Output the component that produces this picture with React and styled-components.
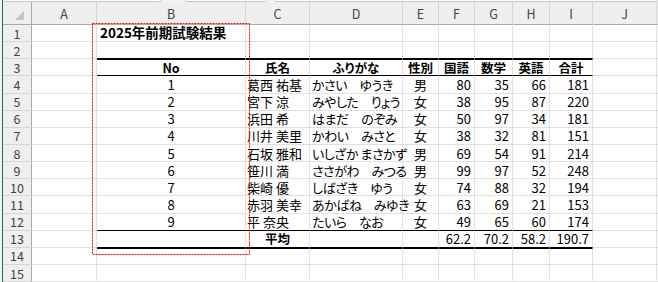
import React from "react"
import styled, { createGlobalStyle } from "styled-components"

const GlobalStyle = createGlobalStyle`
  html, body {
    margin: 0;
    padding: 0;
    background: #fff;
  }
  body {
    font-family: "Noto Sans CJK JP", "Noto Sans", sans-serif;
    color: #000;
  }
`

const LETTERS = ["A", "B", "C", "D", "E", "F", "G", "H", "I", "J", ""]
const WIDTHS = [29, 65, 149, 64, 93, 36, 36, 38, 37, 43, 64, 40]

const students = [
  [1, "葛西 祐基", "かさい　ゆうき", "男", 80, 35, 66, 181],
  [2, "宮下 涼", "みやした　りょう", "女", 38, 95, 87, 220],
  [3, "浜田 希", "はまだ　のぞみ", "女", 50, 97, 34, 181],
  [4, "川井 美里", "かわい　みさと", "女", 38, 32, 81, 151],
  [5, "石坂 雅和", "いしざか まさかず", "男", 69, 54, 91, 214],
  [6, "笹川 満", "ささがわ　みつる", "男", 99, 97, 52, 248],
  [7, "柴崎 優", "しばざき　ゆう", "女", 74, 88, 32, 194],
  [8, "赤羽 美幸", "あかばね　みゆき", "女", 63, 69, 21, 153],
  [9, "平 奈央", "たいら　なお", "女", 49, 65, 60, 174],
]

const Window = styled.div`
  position: relative;
  display: flex;
  width: 658px;
  height: 282px;
  overflow: hidden;
  background: #fff;
`

const Edge = styled.div`
  width: 2px;
  background: #f3f3f3;
`

const GreenLine = styled.div`
  width: 1px;
  background: #1f7244;
`

const Main = styled.div`
  flex: 1;
  min-width: 0;
  display: flex;
  flex-direction: column;
`

const TopBar = styled.div`
  height: 3px;
  display: flex;
  background: #f3f3f3;
  padding-left: 1px;
`

const Field = styled.div`
  box-sizing: border-box;
  width: ${p => p.$w}px;
  margin-right: ${p => p.$gap || 0}px;
  height: 2px;
  background: #fff;
  border: 1px solid #c9c9c9;
  border-top: none;
  border-radius: 0 0 4px 4px;
`

const Sheet = styled.div`
  display: grid;
  grid-template-columns: ${WIDTHS.map(w => w + "px").join(" ")};
  grid-template-rows: 23px repeat(15, 17.1429px);
`

const HeadCell = styled.div`
  box-sizing: border-box;
  display: flex;
  align-items: center;
  justify-content: center;
  background: #efefef;
  color: #444;
  font-size: 12.5px;
  border-right: 1px solid ${p => (p.$row ? "#a9a9a9" : "#d6d6d6")};
  border-bottom: 1px solid ${p => (p.$row ? "#d6d6d6" : "#a9a9a9")};
`

const Corner = styled(HeadCell)`
  align-items: flex-end;
  justify-content: flex-end;
  padding: 0 7px 4px 0;
  border-right: 1px solid #a9a9a9;
`

const justify = { left: "flex-start", center: "center", right: "flex-end" }

const Cell = styled.div`
  box-sizing: border-box;
  display: flex;
  align-items: center;
  justify-content: ${p => justify[p.$align || "left"]};
  padding: 0 ${p => (p.$align === "right" ? 3 : 0)}px 0 ${p => p.$pad || 0}px;
  border-right: 1px solid #e0e0e0;
  border-bottom: 1px solid ${p => (p.$rule ? "#000" : "#e0e0e0")};
  border-top: ${p => (p.$top ? "1px solid #000" : "none")};
  font-size: ${p => p.$size || 13}px;
  font-weight: ${p => (p.$bold ? 700 : 400)};
  font-feature-settings: "palt";
  letter-spacing: ${p => p.$track || 0}px;
  white-space: nowrap;
  line-height: 1;
`

const Marquee = styled.svg`
  position: absolute;
  left: 92px;
  top: 23px;
  pointer-events: none;
`

// columns: 0 = A, 1 = B ... 8 = I, 9 = J; the table spans B..I
const inTable = c => c >= 1 && c <= 8

function cellsFor(r) {
  const row = Array(11).fill(null)
  if (r === 1) {
    row[1] = { text: "2025年前期試験結果", bold: true, size: 13.5, pad: 3 }
  } else if (r === 3) {
    const heads = ["No", "氏名", "ふりがな", "性別", "国語", "数学", "英語", "合計"]
    heads.forEach((h, i) => (row[i + 1] = { text: h, bold: true, align: "center", size: 12.5 }))
  } else if (r >= 4 && r <= 12) {
    const s = students[r - 4]
    row[1] = { text: s[0], align: "center" }
    row[2] = { text: s[1], pad: 1 }
    row[3] = { text: s[2], pad: 2, track: -0.5 }
    row[4] = { text: s[3], align: "center" }
    for (let i = 4; i < 8; i++) row[i + 1] = { text: s[i], align: "right" }
  } else if (r === 13) {
    row[2] = { text: "平均", bold: true, align: "center", size: 12.5 }
    ;["62.2", "70.2", "58.2", "190.7"].forEach((v, i) => (row[i + 5] = { text: v, align: "right" }))
  }
  return row
}

const ruleBelow = r => r === 2 || r === 3 || r === 12 || r === 13
const ruleAbove = r => r === 3 || r === 14

export default function App() {
  const rows = Array.from({ length: 15 }, (_, i) => i + 1)
  return (
    <>
      <GlobalStyle />
      <Window>
        <Edge />
        <GreenLine />
        <Main>
          <TopBar>
            <Field $w={159} $gap={24} />
            <Field $w={84} $gap={7} />
            <Field $w={390} />
          </TopBar>
          <Sheet>
            <Corner>
              <svg width="9" height="9" viewBox="0 0 9 9">
                <path d="M9 0 L9 9 L0 9 Z" fill="#c4c4c4" />
              </svg>
            </Corner>
            {LETTERS.map((l, i) => (
              <HeadCell key={"h" + i}>{l}</HeadCell>
            ))}
            {rows.map(r => (
              <React.Fragment key={r}>
                <HeadCell $row>{r}</HeadCell>
                {cellsFor(r).map((c, col) => {
                  const table = inTable(col)
                  return (
                    <Cell
                      key={col}
                      $rule={table && ruleBelow(r)}
                      $top={table && ruleAbove(r)}
                      $align={c?.align}
                      $bold={c?.bold}
                      $size={c?.size}
                      $pad={c?.pad}
                      $track={c?.track}
                    >
                      {c?.text}
                    </Cell>
                  )
                })}
              </React.Fragment>
            ))}
          </Sheet>
        </Main>
        <Marquee width="158" height="232">
          <rect x="0.5" y="0.5" width="157" height="231" fill="none" stroke="#ff0000" strokeWidth="1" strokeDasharray="2 1" />
        </Marquee>
      </Window>
    </>
  )
}
